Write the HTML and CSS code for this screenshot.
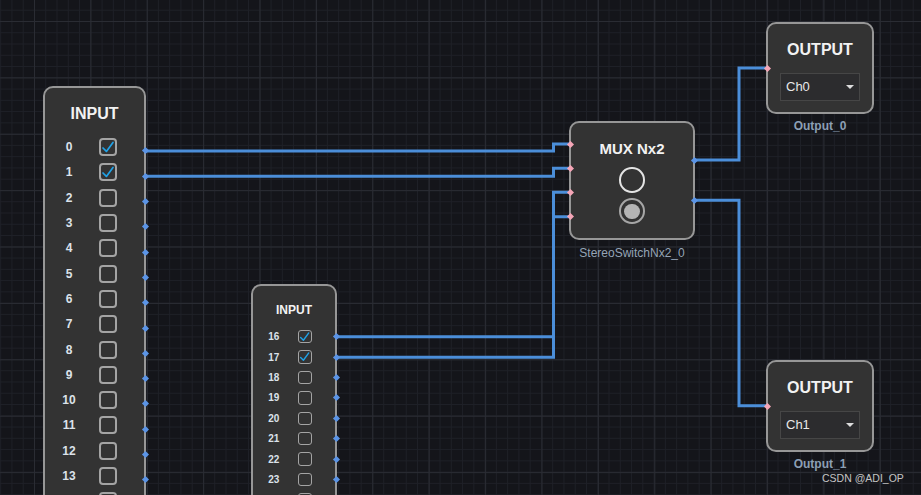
FILE: index.html
```html
<!DOCTYPE html>
<html lang="en">

<head>
    <meta charset="UTF-8">
    <meta name="viewport" content="width=device-width, initial-scale=1.0">
    <title>Signal graph</title>

    <link rel="stylesheet" href="styles.css">
</head>

<body>
    <div class="canvas">
        <!-- wires under the nodes -->
        <svg class="wires" width="921" height="495" viewBox="0 0 921 495">
            <path d="M145 151 H553.5 V144 H570" />
            <path d="M145 176.3 H553.5 V168.3 H570" />
            <path d="M336 336.7 H553.5 V192.3 H570" />
            <path d="M336 357.3 H553.5 V216.7 H570" />
            <path d="M694 160 H739 V68 H767" />
            <path d="M694 200.3 H739 V405.7 H767" />
        </svg>

        <!-- INPUT 0..13, next row runs off the canvas -->
        <div class="node-wrap input-big">
            <div class="node">
                <div class="title">INPUT</div>
                <div class="rows">
                    <div class="row"><span class="label">0</span><span class="check"><svg viewBox="2 2 14 14"><path d="M4 10 L7.4 13.4 L14 4.4" /></svg></span><i class="port out"></i></div>
                    <div class="row"><span class="label">1</span><span class="check"><svg viewBox="2 2 14 14"><path d="M4 10 L7.4 13.4 L14 4.4" /></svg></span><i class="port out"></i></div>
                    <div class="row"><span class="label">2</span><span class="check"></span><i class="port out"></i></div>
                    <div class="row"><span class="label">3</span><span class="check"></span><i class="port out"></i></div>
                    <div class="row"><span class="label">4</span><span class="check"></span><i class="port out"></i></div>
                    <div class="row"><span class="label">5</span><span class="check"></span><i class="port out"></i></div>
                    <div class="row"><span class="label">6</span><span class="check"></span><i class="port out"></i></div>
                    <div class="row"><span class="label">7</span><span class="check"></span><i class="port out"></i></div>
                    <div class="row"><span class="label">8</span><span class="check"></span><i class="port out"></i></div>
                    <div class="row"><span class="label">9</span><span class="check"></span><i class="port out"></i></div>
                    <div class="row"><span class="label">10</span><span class="check"></span><i class="port out"></i></div>
                    <div class="row"><span class="label">11</span><span class="check"></span><i class="port out"></i></div>
                    <div class="row"><span class="label">12</span><span class="check"></span><i class="port out"></i></div>
                    <div class="row"><span class="label">13</span><span class="check"></span><i class="port out"></i></div>
                    <div class="row"><span class="label"></span><span class="check"></span></div>
                </div>
            </div>
        </div>

        <!-- INPUT 16..23 -->
        <div class="node-wrap input-small">
            <div class="node">
                <div class="title">INPUT</div>
                <div class="rows">
                    <div class="row"><span class="label">16</span><span class="check"><svg viewBox="2 2 14 14"><path d="M4 10 L7.4 13.4 L14 4.4" /></svg></span><i class="port out"></i></div>
                    <div class="row"><span class="label">17</span><span class="check"><svg viewBox="2 2 14 14"><path d="M4 10 L7.4 13.4 L14 4.4" /></svg></span><i class="port out"></i></div>
                    <div class="row"><span class="label">18</span><span class="check"></span><i class="port out"></i></div>
                    <div class="row"><span class="label">19</span><span class="check"></span><i class="port out"></i></div>
                    <div class="row"><span class="label">20</span><span class="check"></span><i class="port out"></i></div>
                    <div class="row"><span class="label">21</span><span class="check"></span><i class="port out"></i></div>
                    <div class="row"><span class="label">22</span><span class="check"></span><i class="port out"></i></div>
                    <div class="row"><span class="label">23</span><span class="check"></span><i class="port out"></i></div>
                    <div class="row"><span class="label"></span><span class="check"></span></div>
                </div>
            </div>
        </div>

        <!-- MUX -->
        <div class="node-wrap mux">
            <div class="node">
                <div class="title">MUX Nx2</div>
                <span class="radio"></span>
                <span class="radio selected"></span>
                <i class="port in" style="top: 18.5px"></i>
                <i class="port in" style="top: 42.8px"></i>
                <i class="port in" style="top: 66.8px"></i>
                <i class="port in" style="top: 91.2px"></i>
                <i class="port out" style="top: 34.5px"></i>
                <i class="port out" style="top: 74.8px"></i>
            </div>
            <div class="caption">StereoSwitchNx2_0</div>
        </div>

        <!-- OUTPUTS -->
        <div class="node-wrap output output-0">
            <div class="node">
                <div class="title">OUTPUT</div>
                <div class="select"><span>Ch0</span><i class="caret"></i></div>
                <i class="port in"></i>
            </div>
            <div class="caption">Output_0</div>
        </div>

        <div class="node-wrap output output-1">
            <div class="node">
                <div class="title">OUTPUT</div>
                <div class="select"><span>Ch1</span><i class="caret"></i></div>
                <i class="port in"></i>
            </div>
            <div class="caption">Output_1</div>
        </div>

        <div class="watermark">CSDN @ADI_OP</div>
    </div>
</body>

</html>
```

FILE: styles.css
```css
* {
    margin: 0;
    padding: 0;
    box-sizing: border-box;
}

body {
    width: 921px;
    height: 495px;
    overflow: hidden;
    font-family: "Liberation Sans", Arial, sans-serif;
}

.canvas {
    position: relative;
    width: 921px;
    height: 495px;
    overflow: hidden;
    background-color: #14151a;
    background-image:
        linear-gradient(to right, #2a2c33 1px, transparent 1px),
        linear-gradient(to bottom, #2a2c33 1px, transparent 1px),
        linear-gradient(to right, #1e2027 1px, transparent 1px),
        linear-gradient(to bottom, #1e2027 1px, transparent 1px);
    background-size: 56.4px 56.4px, 56.4px 56.4px, 11.28px 11.28px, 11.28px 11.28px;
    background-position: 34px 21px;
}

.wires {
    position: absolute;
    left: 0;
    top: 0;
}

.wires path {
    fill: none;
    stroke: #4b8ed9;
    stroke-width: 3;
}

/* nodes sit on the canvas at their own place */
.node-wrap {
    position: absolute;
}

.node {
    position: relative;
    background: #333333;
    border: 2px solid #979797;
    border-radius: 10px;
    color: #f2f2f2;
}

.title {
    text-align: center;
    font-weight: bold;
}

.row {
    position: relative;
    display: flex;
    align-items: center;
}

.label {
    text-align: center;
    font-weight: bold;
    color: #dce2ea;
}

.check {
    display: block;
    border: 2px solid #a4a4a4;
    border-radius: 4px;
}

.check svg {
    display: block;
    width: 100%;
    height: 100%;
}

.check path {
    fill: none;
    stroke: #20a3e8;
    stroke-width: 1.7;
    stroke-linecap: round;
    stroke-linejoin: round;
}

.port {
    position: absolute;
    width: 5px;
    height: 5px;
    transform: rotate(45deg);
}

.port.out {
    right: -3.5px;
    background: #5b94e6;
}

.port.in {
    left: -3.5px;
    background: #f5a6b7;
}

/* big input */
.input-big {
    left: 43px;
    top: 86px;
    width: 103px;
}

.input-big .title {
    font-size: 16px;
    line-height: 20px;
    padding: 16px 0 10.5px;
}

.input-big .row {
    height: 25.3px;
}

.input-big .label {
    width: 48px;
    font-size: 12px;
}

.input-big .check {
    width: 18px;
    height: 18px;
    margin-left: 6.3px;
}

.input-big .port {
    top: calc(50% + 1.3px);
}

/* small input */
.input-small {
    left: 251px;
    top: 284px;
    width: 86px;
}

.input-small .title {
    font-size: 12px;
    line-height: 14px;
    padding: 17.3px 0 9.2px;
}

.input-small .row {
    height: 20.4px;
}

.input-small .label {
    width: 41.4px;
    font-size: 10px;
}

.input-small .check {
    width: 13.4px;
    height: 13.4px;
    margin-left: 3.9px;
    border-width: 1.6px;
    border-radius: 3px;
}

.input-small .port {
    top: calc(50% - 2.5px);
}

/* mux */
.mux {
    left: 569px;
    top: 121px;
    width: 126px;
}

.mux .node {
    height: 119px;
    display: flex;
    flex-direction: column;
    align-items: center;
}

.mux .title {
    font-size: 15px;
    line-height: 18px;
    padding-top: 16.7px;
}

.radio {
    display: flex;
    align-items: center;
    justify-content: center;
    width: 25.6px;
    height: 25.6px;
    margin-top: 9.6px;
    border: 2px solid #e4e4e4;
    border-radius: 50%;
}

.radio.selected {
    margin-top: 5.6px;
    border-color: #a6a6a6;
}

.radio.selected::after {
    content: "";
    width: 15.3px;
    height: 15.3px;
    border-radius: 50%;
    background: #b4b4b4;
}

.caption {
    margin-top: 5.7px;
    text-align: center;
    font-size: 12px;
    line-height: 14px;
    color: #95a4b6;
    white-space: nowrap;
}

/* outputs */
.output {
    left: 766px;
    width: 108px;
}

.output-0 {
    top: 22px;
}

.output-1 {
    top: 360px;
}

.output .node {
    height: 92px;
    padding: 16.7px 12px 0;
}

.output .title {
    font-size: 16px;
    line-height: 18px;
}

.output .port {
    top: calc(50% - 2.5px);
}

.select {
    display: flex;
    align-items: center;
    justify-content: space-between;
    height: 28px;
    margin-top: 14px;
    padding: 0 5px;
    background: #2c2c2e;
    border: 1px solid #464646;
    font-size: 13px;
    color: #e8e8e8;
}

.caret {
    width: 0;
    height: 0;
    border-left: 4px solid transparent;
    border-right: 4px solid transparent;
    border-top: 4px solid #dddddd;
}

.output .caption {
    margin-top: 5px;
    font-weight: bold;
    color: #8c9fb4;
}

.watermark {
    position: absolute;
    left: 822px;
    top: 472px;
    font-size: 10.5px;
    color: #c4c4c4;
}
```
